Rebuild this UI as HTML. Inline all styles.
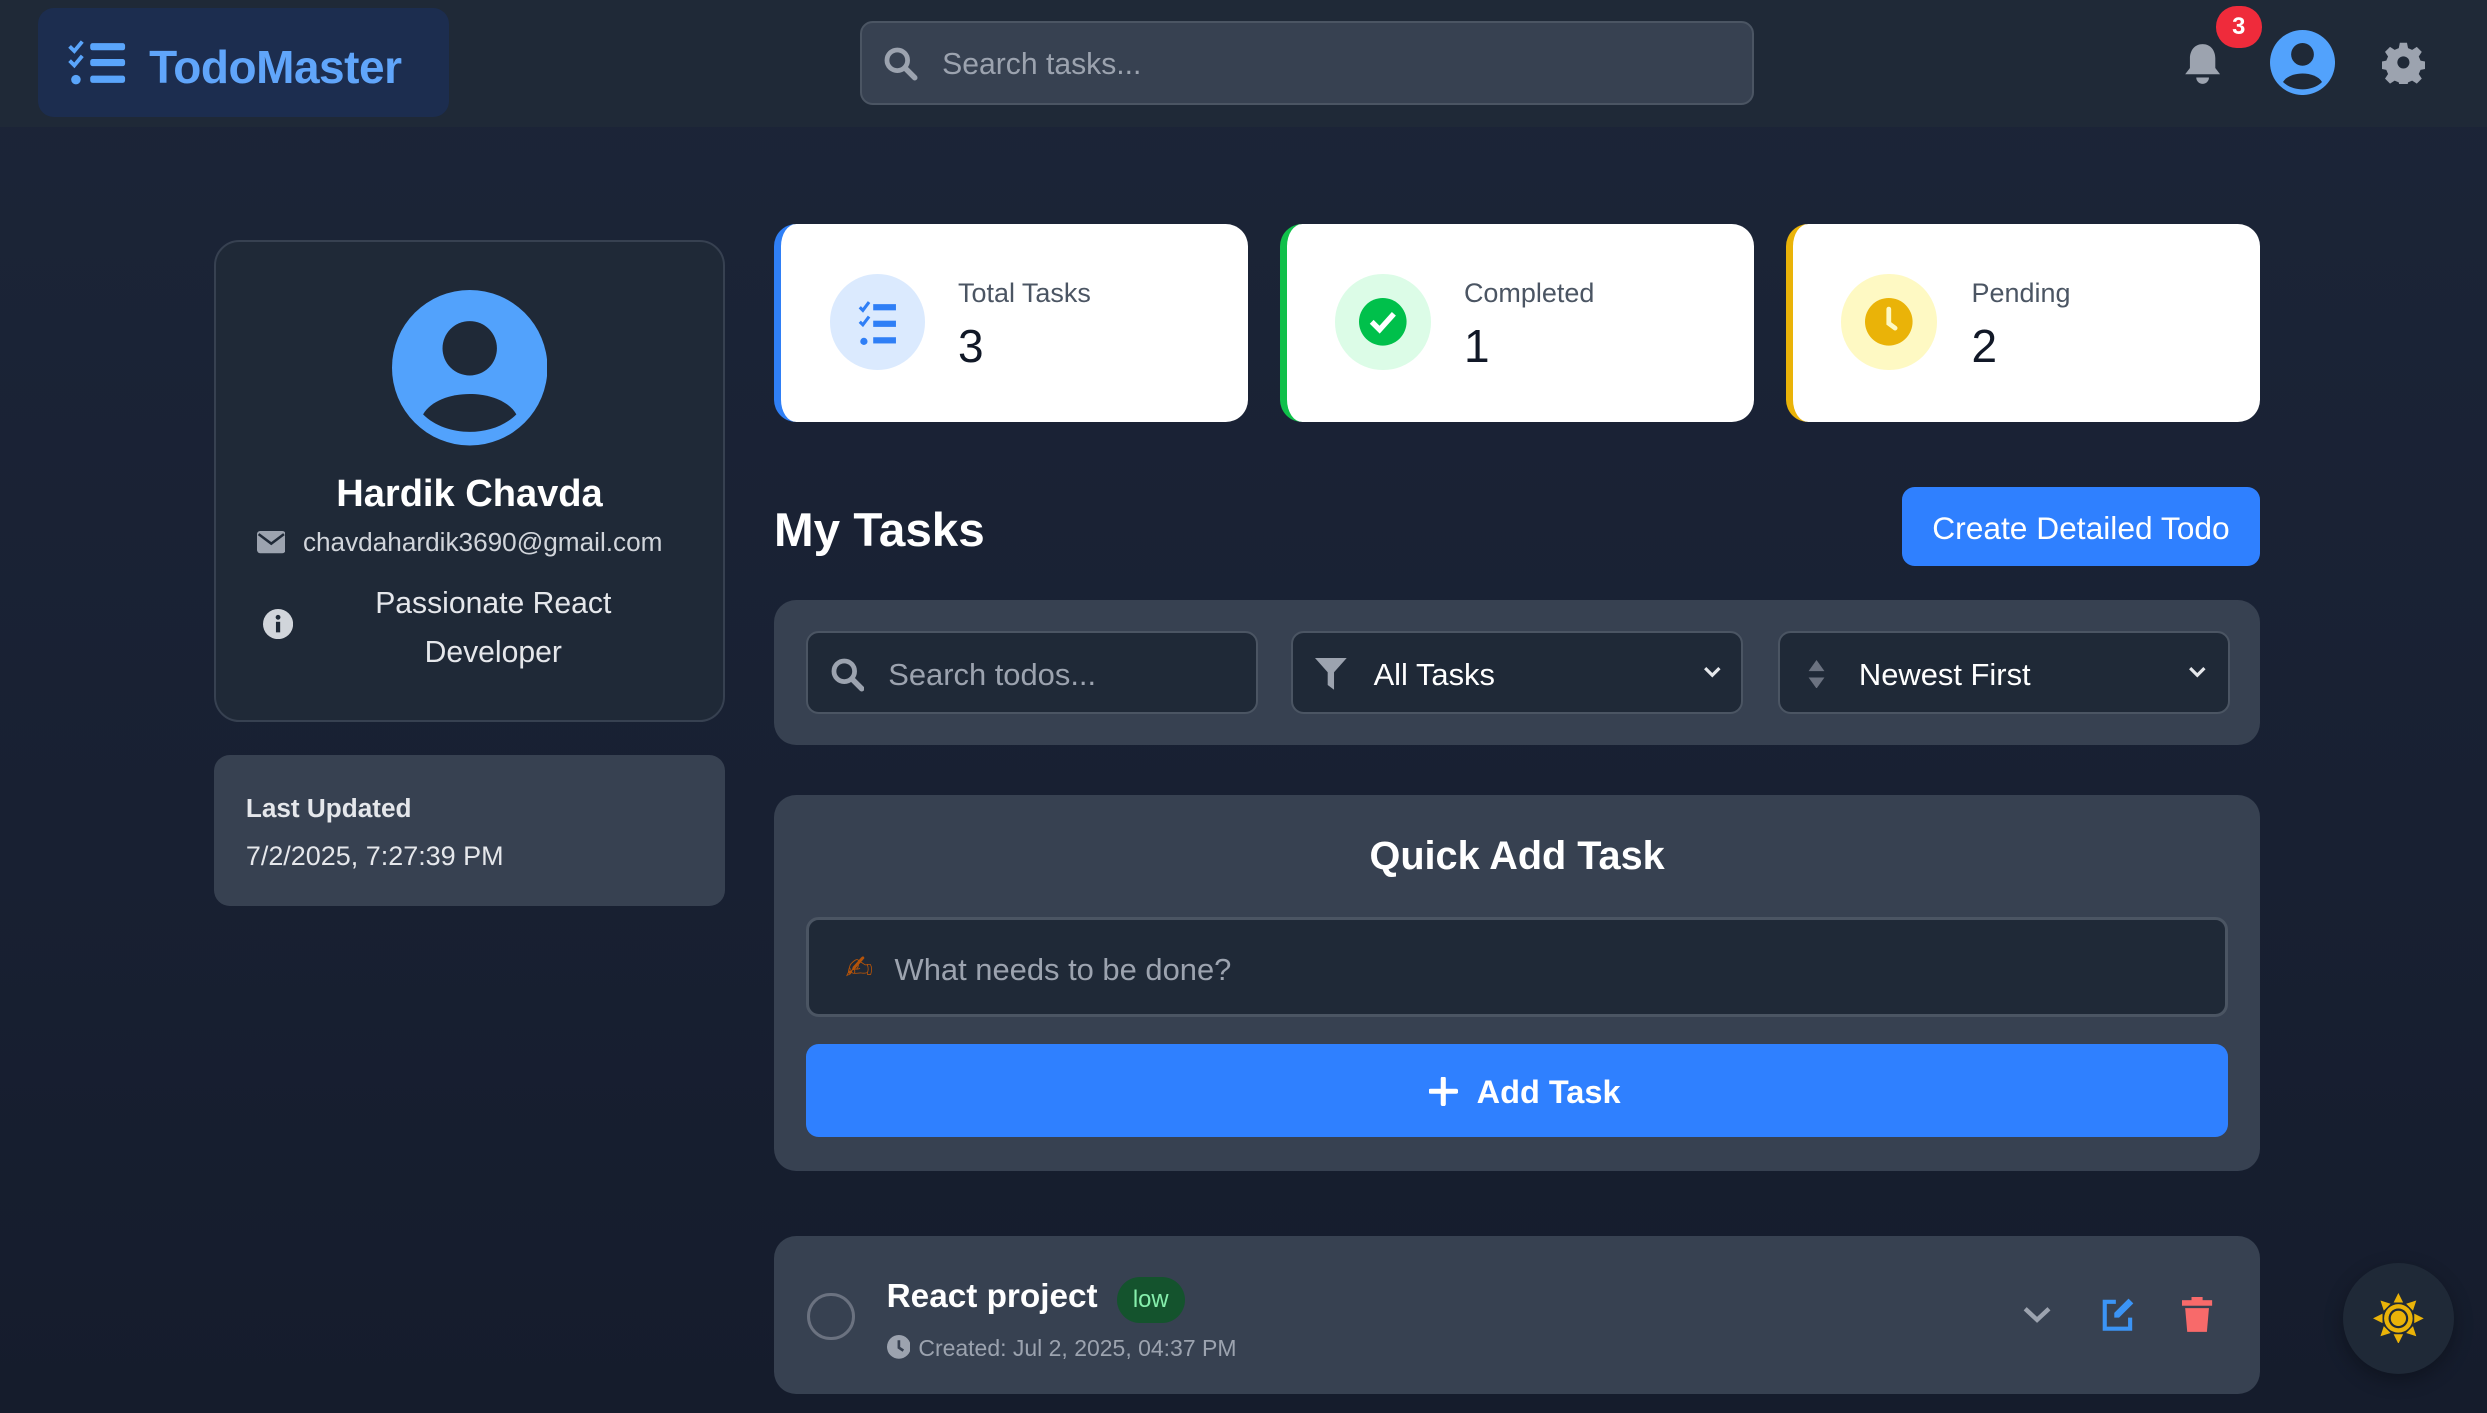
<!DOCTYPE html>
<html><head><meta charset="utf-8">
<style>
html,body{margin:0;padding:0;}
body{width:2487px;height:1413px;overflow:hidden;background:#1b2334;}
#r{position:absolute;left:0;top:0;width:1568px;height:891px;zoom:1.5861;font-family:"Liberation Sans","DejaVu Sans",sans-serif;background:linear-gradient(180deg,#1c2538 0%,#182032 60%,#151c2c 100%);overflow:hidden;color:#fff}
.a{position:absolute}
.card{border-radius:14px}
.inp{position:absolute;background:#1f2937;border:1.5px solid #4b5563;border-radius:8px;box-sizing:border-box}
</style></head><body><div id="r">
<!-- header -->
<div class="a" style="left:0;top:0;width:1568px;height:80px;background:#1f2937"></div>
<div class="a" style="left:24px;top:5px;width:259px;height:69px;background:#1c2d4f;border-radius:10px"></div>
<svg class="a" style="left:43px;top:25px" width="37" height="29" viewBox="0 0 37 29"><g fill="#5aa5fb"><path d="M1 4l3 3 5-6" stroke="#5aa5fb" stroke-width="2.4" fill="none"/><path d="M1 13l3 3 5-6" stroke="#5aa5fb" stroke-width="2.4" fill="none"/><circle cx="5" cy="25" r="3"/><rect x="14" y="2" width="22" height="4.5" rx="1.5"/><rect x="14" y="12" width="22" height="4.5" rx="1.5"/><rect x="14" y="22.5" width="22" height="4.5" rx="1.5"/></g></svg>
<div class="a" style="left:94px;top:25px;font-size:29px;font-weight:bold;color:#60a5fa;letter-spacing:-0.3px">TodoMaster</div>
<div class="a" style="left:542px;top:13px;width:564px;height:53px;background:#374151;border:1.5px solid #4b5563;border-radius:8px;box-sizing:border-box"></div>
<svg class="a" style="left:557px;top:29px" width="22" height="22" viewBox="0 0 22 22"><circle cx="9" cy="9" r="6.5" stroke="#9ca3af" stroke-width="3" fill="none"/><path d="M14 14l6 6" stroke="#9ca3af" stroke-width="3.5" stroke-linecap="round"/></svg>
<div class="a" style="left:594px;top:30px;font-size:19px;color:#9ca3af">Search tasks...</div>
<svg class="a" style="left:1376px;top:26px" width="26" height="28" viewBox="0 0 26 28"><path d="M13 2c-5 0-8 4-8 9v6l-3 4h22l-3-4v-6c0-5-3-9-8-9z" fill="#9ca3af"/><path d="M9 23a4 4 0 0 0 8 0z" fill="#9ca3af"/></svg>
<div class="a" style="left:1397px;top:4px;width:29px;height:26px;border-radius:13px;background:#ef2b3b;font-size:15px;font-weight:bold;text-align:center;line-height:26px">3</div>
<svg class="a" style="left:1431px;top:19px" width="41" height="41" viewBox="0 0 40 40"><circle cx="20" cy="20" r="20" fill="#52a2fc"/><circle cx="20" cy="15" r="7" fill="#1f2937"/><path d="M8 32c4-7 20-7 24 0c-6 6-18 6-24 0z" fill="#1f2937"/></svg>
<svg class="a" style="left:1502px;top:26px" width="27" height="27" viewBox="0 0 24 24"><path fill="#9ca3af" d="M10 1h4l.6 3 2.3 1 2.6-1.7 2.8 2.8-1.7 2.6 1 2.3 3 .6v4l-3 .6-1 2.3 1.7 2.6-2.8 2.8-2.6-1.7-2.3 1-.6 3h-4l-.6-3-2.3-1-2.6 1.7-2.8-2.8 1.7-2.6-1-2.3-3-.6v-4l3-.6 1-2.3-1.7-2.6 2.8-2.8 2.6 1.7 2.3-1z"/><circle cx="12" cy="12" r="3.4" fill="#1f2937"/></svg>

<!-- profile -->
<div class="a" style="left:135px;top:151px;width:322px;height:304px;background:#1f2937;border:1.5px solid #374151;border-radius:16px;box-sizing:border-box"></div>
<svg class="a" style="left:247px;top:183px" width="98" height="98" viewBox="0 0 40 40"><circle cx="20" cy="20" r="20" fill="#52a2fc"/><circle cx="20" cy="15" r="7" fill="#1f2937"/><path d="M8 32c4-7 20-7 24 0c-6 6-18 6-24 0z" fill="#1f2937"/></svg>
<div class="a" style="left:135px;top:298px;width:322px;text-align:center;font-size:24px;font-weight:bold">Hardik Chavda</div>
<svg class="a" style="left:162px;top:335px" width="18" height="14" viewBox="0 0 18 14"><rect width="18" height="14" rx="2" fill="#9ca3af"/><path d="M1 2l8 6 8-6" stroke="#1f2937" stroke-width="1.6" fill="none"/></svg>
<div class="a" style="left:191px;top:332px;font-size:16.5px;color:#d1d5db">chavdahardik3690@gmail.com</div>
<svg class="a" style="left:166px;top:384px" width="19" height="19" viewBox="0 0 20 20"><circle cx="10" cy="10" r="10" fill="#d1d5db"/><rect x="8.6" y="8.5" width="2.8" height="7" fill="#1f2937"/><circle cx="10" cy="5.5" r="1.6" fill="#1f2937"/></svg>
<div class="a" style="left:200px;top:365px;width:222px;text-align:center;font-size:19px;line-height:31px;color:#e5e7eb">Passionate React<br>Developer</div>
<div class="a" style="left:135px;top:476px;width:322px;height:95px;background:#374151;border-radius:10px"></div>
<div class="a" style="left:155px;top:500px;font-size:16.5px;font-weight:bold;color:#e5e7eb">Last Updated</div>
<div class="a" style="left:155px;top:530px;font-size:17px;color:#e5e7eb">7/2/2025, 7:27:39 PM</div>

<!-- stats -->
<div class="a card" style="left:488px;top:141px;width:299px;height:125px;background:#fff;border-left:5px solid #2f7ff6;box-sizing:border-box"></div>
<div class="a card" style="left:807px;top:141px;width:299px;height:125px;background:#fff;border-left:5px solid #10c04a;box-sizing:border-box"></div>
<div class="a card" style="left:1126px;top:141px;width:299px;height:125px;background:#fff;border-left:5px solid #eab308;box-sizing:border-box"></div>
<div class="a" style="left:523px;top:173px;width:60px;height:60px;border-radius:30px;background:#dbeafe"></div>
<svg class="a" style="left:538px;top:189px" width="32" height="30" viewBox="0 0 38 46"><g fill="#2f7ff6"><path d="M1 7l3 3 6-8" stroke="#2f7ff6" stroke-width="3" fill="none"/><path d="M1 21l3 3 6-8" stroke="#2f7ff6" stroke-width="3" fill="none"/><circle cx="5" cy="40" r="3.5"/><rect x="14" y="4" width="22" height="6"/><rect x="14" y="20" width="22" height="6"/><rect x="14" y="36" width="22" height="6"/></g></svg>
<div class="a" style="left:842px;top:173px;width:60px;height:60px;border-radius:30px;background:#dcfce7"></div>
<svg class="a" style="left:857px;top:188px" width="30" height="30" viewBox="0 0 30 30"><circle cx="15" cy="15" r="15" fill="#00c04b"/><path d="M8 15l5 5 9-10" stroke="#fff" stroke-width="3.4" fill="none"/></svg>
<div class="a" style="left:1161px;top:173px;width:60px;height:60px;border-radius:30px;background:#fef9c3"></div>
<svg class="a" style="left:1176px;top:188px" width="30" height="30" viewBox="0 0 30 30"><circle cx="15" cy="15" r="15" fill="#eab308"/><path d="M15 7v9l4 3" stroke="#fef9c3" stroke-width="3" fill="none" stroke-linecap="round"/></svg>
<div class="a" style="left:604px;top:175px;font-size:17px;color:#4b5563">Total Tasks</div>
<div class="a" style="left:604px;top:201px;font-size:29px;color:#111827">3</div>
<div class="a" style="left:923px;top:175px;font-size:17px;color:#4b5563">Completed</div>
<div class="a" style="left:923px;top:201px;font-size:29px;color:#111827">1</div>
<div class="a" style="left:1243px;top:175px;font-size:17px;color:#4b5563">Pending</div>
<div class="a" style="left:1243px;top:201px;font-size:29px;color:#111827">2</div>

<!-- my tasks -->
<div class="a" style="left:488px;top:317px;font-size:30px;font-weight:bold">My Tasks</div>
<div class="a" style="left:1199px;top:307px;width:226px;height:50px;background:#2f80ff;border-radius:8px;font-size:20px;text-align:center;line-height:52px">Create Detailed Todo</div>

<div class="a card" style="left:488px;top:378px;width:937px;height:92px;background:#374151"></div>
<div class="inp" style="left:508px;top:398px;width:285px;height:52px"></div>
<svg class="a" style="left:523px;top:414px" width="22" height="22" viewBox="0 0 22 22"><circle cx="9" cy="9" r="6.5" stroke="#9ca3af" stroke-width="3" fill="none"/><path d="M14 14l6 6" stroke="#9ca3af" stroke-width="3.5" stroke-linecap="round"/></svg>
<div class="a" style="left:560px;top:414px;font-size:19.5px;color:#9ca3af">Search todos...</div>
<div class="inp" style="left:814px;top:398px;width:285px;height:52px"></div>
<svg class="a" style="left:829px;top:415px" width="20" height="20" viewBox="0 0 20 20"><path d="M0 0h20l-8 9v11l-4-3v-8z" fill="#9ca3af"/></svg>
<div class="a" style="left:866px;top:414px;font-size:19.5px;color:#fff">All Tasks</div>
<svg class="a" style="left:1073px;top:419px" width="13" height="10" viewBox="0 0 13 10"><path d="M2 2l4.5 4.5L11 2" stroke="#e5e7eb" stroke-width="2" fill="none"/></svg>
<div class="inp" style="left:1121px;top:398px;width:285px;height:52px"></div>
<svg class="a" style="left:1139px;top:416px" width="12" height="18" viewBox="0 0 12 18"><path d="M6 0l5 7H1zM6 18l5-7H1z" fill="#6b7280"/></svg>
<div class="a" style="left:1172px;top:414px;font-size:19.5px;color:#fff">Newest First</div>
<svg class="a" style="left:1379px;top:419px" width="13" height="10" viewBox="0 0 13 10"><path d="M2 2l4.5 4.5L11 2" stroke="#e5e7eb" stroke-width="2" fill="none"/></svg>

<!-- quick add -->
<div class="a card" style="left:488px;top:501px;width:937px;height:237px;background:#374151"></div>
<div class="a" style="left:488px;top:526px;width:937px;text-align:center;font-size:25px;font-weight:bold">Quick Add Task</div>
<div class="inp" style="left:508px;top:578px;width:897px;height:63px;border-width:2px"></div>
<div class="a" style="left:533px;top:598px;font-size:21px;color:#b45309">✍</div>
<div class="a" style="left:564px;top:600px;font-size:19.5px;color:#9ca3af">What needs to be done?</div>
<div class="a" style="left:508px;top:658px;width:897px;height:59px;background:#2f80ff;border-radius:8px"></div>
<svg class="a" style="left:901px;top:679px" width="18" height="18" viewBox="0 0 18 18"><path d="M9 1v16M1 9h16" stroke="#fff" stroke-width="3.2" stroke-linecap="round"/></svg>
<div class="a" style="left:931px;top:677px;font-size:20.5px;font-weight:bold;color:#fff">Add Task</div>

<!-- task -->
<div class="a card" style="left:488px;top:779px;width:937px;height:100px;background:#374151"></div>
<div class="a" style="left:509px;top:815px;width:26px;height:26px;border:2.5px solid #6b7280;border-radius:50%"></div>
<div class="a" style="left:559px;top:806px;font-size:21px;font-weight:bold;color:#fff">React project</div>
<div class="a" style="left:704px;top:805px;width:43px;height:29px;border-radius:15px;background:#14532d;color:#86efac;font-size:15px;text-align:center;line-height:29px">low</div>
<svg class="a" style="left:559px;top:842px" width="15" height="15" viewBox="0 0 16 16"><circle cx="8" cy="8" r="8" fill="#9ca3af"/><path d="M8 3.5v5l3 2" stroke="#374151" stroke-width="1.8" fill="none"/></svg>
<div class="a" style="left:579px;top:842px;font-size:14.5px;color:#9ca3af">Created: Jul 2, 2025, 04:37 PM</div>
<svg class="a" style="left:1275px;top:822px" width="19" height="13" viewBox="0 0 19 13"><path d="M2 3l7.5 7L17 3" stroke="#9ca3af" stroke-width="2.8" fill="none"/></svg>
<svg class="a" style="left:1324px;top:818px" width="22" height="22" viewBox="0 0 22 22"><path d="M10 3H3v17h16v-7" stroke="#3b94f5" stroke-width="2.6" fill="none"/><path d="M18 1l3 3-9 9H9v-3z" fill="#3b94f5"/></svg>
<svg class="a" style="left:1376px;top:818px" width="19" height="22" viewBox="0 0 19 22"><rect x="0" y="2" width="19" height="3.5" fill="#f86a6a"/><rect x="6" y="0" width="7" height="3" fill="#f86a6a"/><path d="M2 7h15l-1.3 15H3.3z" fill="#f86a6a"/></svg>

<div class="a" style="left:1477px;top:796px;width:70px;height:70px;border-radius:50%;background:#1f2937;box-shadow:0 4px 12px rgba(0,0,0,.3)"></div>
<svg class="a" style="left:1496px;top:815px" width="32" height="32" viewBox="0 0 32 32"><g fill="#eab308"><circle cx="16" cy="16" r="9"/><path d="M16 0l3 6h-6zM16 32l3-6h-6zM0 16l6-3v6zM32 16l-6-3v6zM4.7 4.7l6.4 2.1-4.3 4.3zM27.3 27.3l-6.4-2.1 4.3-4.3zM27.3 4.7l-2.1 6.4-4.3-4.3zM4.7 27.3l2.1-6.4 4.3 4.3z"/></g><circle cx="16" cy="16" r="6.2" fill="#1f2937"/><circle cx="16" cy="16" r="4.8" fill="#eab308"/></svg>
</div></body></html>
